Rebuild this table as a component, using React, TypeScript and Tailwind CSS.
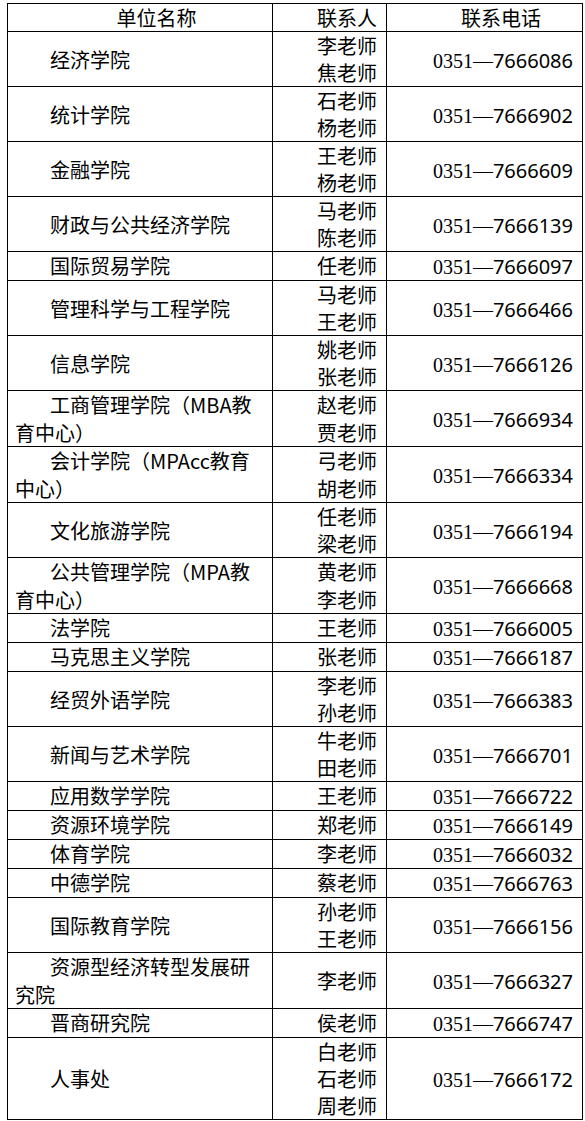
const rows: [string, string[], string][] = [
  ["经济学院", ["李老师", "焦老师"], "7666086"],
  ["统计学院", ["石老师", "杨老师"], "7666902"],
  ["金融学院", ["王老师", "杨老师"], "7666609"],
  ["财政与公共经济学院", ["马老师", "陈老师"], "7666139"],
  ["国际贸易学院", ["任老师"], "7666097"],
  ["管理科学与工程学院", ["马老师", "王老师"], "7666466"],
  ["信息学院", ["姚老师", "张老师"], "7666126"],
  ["工商管理学院（MBA教\n育中心）", ["赵老师", "贾老师"], "7666934"],
  ["会计学院（MPAcc教育\n中心）", ["弓老师", "胡老师"], "7666334"],
  ["文化旅游学院", ["任老师", "梁老师"], "7666194"],
  ["公共管理学院（MPA教\n育中心）", ["黄老师", "李老师"], "7666668"],
  ["法学院", ["王老师"], "7666005"],
  ["马克思主义学院", ["张老师"], "7666187"],
  ["经贸外语学院", ["李老师", "孙老师"], "7666383"],
  ["新闻与艺术学院", ["牛老师", "田老师"], "7666701"],
  ["应用数学学院", ["王老师"], "7666722"],
  ["资源环境学院", ["郑老师"], "7666149"],
  ["体育学院", ["李老师"], "7666032"],
  ["中德学院", ["蔡老师"], "7666763"],
  ["国际教育学院", ["孙老师", "王老师"], "7666156"],
  ["资源型经济转型发展研\n究院", ["李老师"], "7666327"],
  ["晋商研究院", ["侯老师"], "7666747"],
  ["人事处", ["白老师", "石老师", "周老师"], "7666172"],
];

const cell = "border border-black py-0 pl-[7px] pr-[9px] align-middle";

function rowLeading(name: string, people: string[]) {
  if (name.includes("\n")) return "leading-[27.5px]";
  if (people.length === 1) return "leading-[28px]";
  return "leading-[27px]";
}

export default function App() {
  return (
    <div className="min-h-screen bg-white pt-[3px] pl-[7px] text-black font-['Noto_Sans_CJK_SC',sans-serif] text-[20px]">
      <table className="w-[575px] table-fixed border-collapse">
        <colgroup>
          <col className="w-[265px]" />
          <col className="w-[114px]" />
          <col className="w-[196px]" />
        </colgroup>
        <thead>
          <tr className="leading-[27px]">
            <th className={`${cell} text-center font-normal indent-[35px]`}>单位名称</th>
            <th className={`${cell} text-right font-normal`}>联系人</th>
            <th className={`${cell} text-center font-normal indent-[35px]`}>联系电话</th>
          </tr>
        </thead>
        <tbody>
          {rows.map(([name, people, phone]) => (
            <tr key={name} className={rowLeading(name, people)}>
              {/* unit name: first line indented, wraps placed by hand */}
              <td className={`${cell} text-left indent-[35px] whitespace-pre-line`}>{name}</td>
              <td className={`${cell} text-right`}>
                {people.map((p) => (
                  <div key={p}>{p}</div>
                ))}
              </td>
              <td className={`${cell} text-right whitespace-nowrap`}>
                <span className="font-['Liberation_Serif',serif] text-[20px] leading-none">0351—</span>
                <span className="font-['Noto_Sans',sans-serif] text-[20px] leading-none">{phone}</span>
              </td>
            </tr>
          ))}
        </tbody>
      </table>
    </div>
  );
}
